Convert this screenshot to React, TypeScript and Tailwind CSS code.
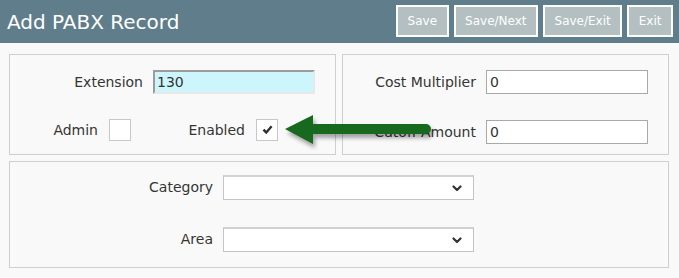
const FONT = { fontFamily: '"DejaVu Sans", Verdana, sans-serif' };

function HeaderButton({ label }: { label: string }) {
  return (
    <button className="h-[32px] px-[9.5px] border-2 border-white bg-[#b3bfc1] text-[12px] text-white leading-none">
      {label}
    </button>
  );
}

function ChevronDown() {
  return (
    <svg width="10" height="7" viewBox="0 0 10 7" className="shrink-0">
      <path d="M1.5 1.5 L5 5 L8.5 1.5" fill="none" stroke="#333" strokeWidth="2.2" strokeLinecap="round" strokeLinejoin="round" />
    </svg>
  );
}

function SelectBox() {
  return (
    <div className="w-[251px] h-[25px] bg-white border border-[#c4c4c4] border-t-2 border-t-[#d2d2d2] flex items-center justify-end pr-[11px]">
      <ChevronDown />
    </div>
  );
}

function HeavyCheck() {
  return (
    <svg width="11" height="10" viewBox="0 0 11 10">
      <path d="M0.5 5.5 L2.5 3.8 L4.2 5.8 L8.8 0.6 L10.5 2 L4.3 9.2 Z" fill="#2f2f2f" />
    </svg>
  );
}

function Checkbox({ checked }: { checked?: boolean }) {
  return (
    <div className="w-[22px] h-[22px] bg-white border border-[#c8c8c8] flex items-center justify-center shrink-0">
      {checked && <HeavyCheck />}
    </div>
  );
}

function GreenArrow() {
  return (
    <svg
      width="160"
      height="40"
      viewBox="0 0 160 40"
      className="absolute left-[283px] top-[112px] pointer-events-none"
      style={{ filter: "drop-shadow(2px 4px 2px rgba(0,0,0,0.35))" }}
    >
      <path d="M2 17 L30 3 L30 12 L143 12 A5 5 0 0 1 143 22 L30 22 L30 32 Z" fill="#17691d" />
    </svg>
  );
}

export default function App() {
  return (
    <div className="relative w-[679px] h-[278px] bg-[#f9f9f9] text-[#353535] overflow-hidden" style={FONT}>
      {/* Header */}
      <div className="h-[43px] bg-[#607d8b] flex items-center justify-between pl-[7px] pr-[6px]">
        <h1 className="text-[20px] text-white leading-none">Add PABX Record</h1>
        <div className="flex gap-[5px] self-start mt-[5px]">
          <HeaderButton label="Save" />
          <HeaderButton label="Save/Next" />
          <HeaderButton label="Save/Exit" />
          <HeaderButton label="Exit" />
        </div>
      </div>

      <div className="pt-[11px] pl-[9px] pr-[10px] flex flex-col gap-[6px]">
        <div className="flex gap-[6px]">
          {/* Left panel */}
          <div className="w-[327px] h-[101px] border border-[#cfcfcf] pt-[15px]">
            <div className="flex items-center gap-[10px]">
              <span className="w-[133px] text-right text-[14px]">Extension</span>
              <div className="w-[162px] h-[24px] bg-[#cdf6fc] border-2 border-t-[#9c9c9c] border-l-[#9c9c9c] border-r-[#e8e8e8] border-b-[#e8e8e8] flex items-center pl-[2px] text-[14px] text-[#333]">
                130
              </div>
            </div>
            <div className="flex items-center mt-[25px]">
              <span className="w-[88px] text-right text-[14px]">Admin</span>
              <div className="ml-[11px]">
                <Checkbox />
              </div>
              <span className="w-[114px] text-right text-[14px]">Enabled</span>
              <div className="ml-[11px]">
                <Checkbox checked />
              </div>
            </div>
          </div>

          {/* Right panel */}
          <div className="w-[327px] h-[101px] border border-[#cfcfcf] pt-[15px]">
            <div className="flex items-center gap-[10px]">
              <span className="w-[133px] text-right text-[14px]">Cost Multiplier</span>
              <div className="w-[162px] h-[24px] bg-white border border-[#a9a9a9] flex items-center pl-[3px] text-[14px] text-[#333]">
                0
              </div>
            </div>
            <div className="flex items-center gap-[10px] mt-[26px]">
              <span className="w-[133px] text-right text-[14px] whitespace-nowrap">Cutoff Amount</span>
              <div className="w-[162px] h-[24px] bg-white border border-[#a9a9a9] flex items-center pl-[3px] text-[14px] text-[#333]">
                0
              </div>
            </div>
          </div>
        </div>

        {/* Bottom panel */}
        <div className="w-[660px] h-[107px] border border-[#cfcfcf] pt-[13px]">
          <div className="flex items-center gap-[10px]">
            <span className="w-[203px] text-right text-[14px]">Category</span>
            <SelectBox />
          </div>
          <div className="flex items-center gap-[10px] mt-[27px]">
            <span className="w-[203px] text-right text-[14px]">Area</span>
            <SelectBox />
          </div>
        </div>
      </div>

      <GreenArrow />
    </div>
  );
}
